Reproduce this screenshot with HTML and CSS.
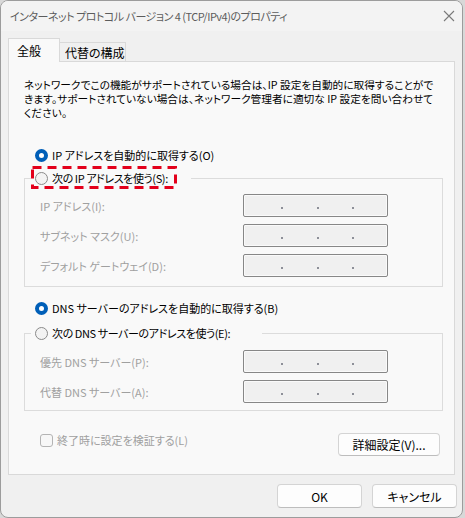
FILE: index.html
```html
<!DOCTYPE html>
<html lang="ja">
<head>
    <meta charset="UTF-8">
    <title>インターネット プロトコル バージョン 4 (TCP/IPv4)のプロパティ</title>
    <link rel="stylesheet" href="styles.css">
</head>
<body>
    <div class="window">
        <div class="titlebar">
            <span class="title">インターネット プロトコル バージョン 4 (TCP/IPv4)のプロパティ</span>
            <svg class="close" width="12" height="12" viewBox="0 0 12 12">
                <path d="M1 1L11 11M11 1L1 11" stroke="#7a7a7a" stroke-width="1.1" fill="none"/>
            </svg>
        </div>

        <div class="client">
            <div class="tabs">
                <div class="tab active">全般</div>
                <div class="tab">代替の構成</div>
            </div>

            <div class="panel">
                <p class="intro">ネットワークでこの機能がサポートされている場合は、IP 設定を自動的に取得することがで<br>きます。サポートされていない場合は、ネットワーク管理者に適切な IP 設定を問い合わせて<br>ください。</p>

                <div class="choice"><span class="radio checked"></span>IP アドレスを自動的に取得する(O)</div>

                <fieldset class="group">
                    <legend class="legend-ip"><span class="radio"></span>次の IP アドレスを使う(S):</legend>
                    <div class="fields">
                        <div class="field"><span class="field-label">IP アドレス(I):</span><span class="ipbox"><i></i><b></b><i></i><b></b><i></i><b></b><i></i></span></div>
                        <div class="field"><span class="field-label">サブネット マスク(U):</span><span class="ipbox"><i></i><b></b><i></i><b></b><i></i><b></b><i></i></span></div>
                        <div class="field"><span class="field-label">デフォルト ゲートウェイ(D):</span><span class="ipbox"><i></i><b></b><i></i><b></b><i></i><b></b><i></i></span></div>
                    </div>
                </fieldset>

                <div class="choice choice-dns"><span class="radio checked"></span>DNS サーバーのアドレスを自動的に取得する(B)</div>

                <fieldset class="group group-dns">
                    <legend class="legend-dns"><span class="radio"></span>次の DNS サーバーのアドレスを使う(E):</legend>
                    <div class="fields">
                        <div class="field"><span class="field-label">優先 DNS サーバー(P):</span><span class="ipbox"><i></i><b></b><i></i><b></b><i></i><b></b><i></i></span></div>
                        <div class="field"><span class="field-label">代替 DNS サーバー(A):</span><span class="ipbox"><i></i><b></b><i></i><b></b><i></i><b></b><i></i></span></div>
                    </div>
                </fieldset>

                <div class="panel-foot">
                    <div class="check"><span class="checkbox"></span>終了時に設定を検証する(L)</div>
                    <button class="btn btn-advanced">詳細設定(V)...</button>
                </div>

                <!-- annotation box around the manual IP option -->
                <svg class="highlight" width="146" height="23" viewBox="0 0 146 23">
                    <rect x="1.5" y="1.5" width="143" height="20" fill="none" stroke="#e3001b" stroke-width="3" stroke-dasharray="9 6"/>
                </svg>
            </div>

            <div class="actions">
                <button class="btn">OK</button>
                <button class="btn">キャンセル</button>
            </div>
        </div>
    </div>
</body>
</html>
```

FILE: styles.css
```css
* {
    box-sizing: border-box;
}

body {
    margin: 0;
    background: #d8d8d8;
    font-family: "Noto Sans CJK JP", "Noto Sans", sans-serif;
    font-size: 11px;
    font-feature-settings: "palt";
    color: #000;
}

.window {
    width: 463px;
    height: 518px;
    border: 1px solid #9c9c9c;
    border-radius: 8px;
    background: #f0f0f0;
    overflow: hidden;
}

.titlebar {
    height: 30px;
    background: #f3f3f3;
    display: flex;
    align-items: center;
    padding: 0 6px 0 9px;
}

.title {
    flex: 1;
    font-size: 11px;
    letter-spacing: -0.5px;
    color: #5c5c5c;
    white-space: nowrap;
}

.close {
    margin-right: 1px;
}

.client {
    padding: 7px 5px 0 7px;
}

.tabs {
    display: flex;
    align-items: flex-end;
    height: 24px;
    margin-bottom: -1px;
    position: relative;
    z-index: 1;
}

.tab {
    height: 19px;
    width: 67px;
    margin-left: -1px;
    padding-left: 5px;
    border: 1px solid #d9d9d9;
    border-bottom: none;
    background: #f0f0f0;
    font-size: 12px;
    display: flex;
    align-items: center;
    white-space: nowrap;
}

.tab.active {
    height: 24px;
    width: 52px;
    margin-left: 0;
    padding-left: 8px;
    background: #f9f9f9;
    position: relative;
    z-index: 2;
}

.tab + .tab {
    margin-bottom: 1px;
    height: 19px;
}

.panel {
    position: relative;
    width: 447px;
    height: 414px;
    border: 1px solid #d9d9d9;
    background: #f9f9f9;
    padding-top: 16px;
}

.intro {
    margin: 0 0 0 15px;
    font-size: 10.7px;
    line-height: 14px;
    white-space: nowrap;
}

.choice {
    display: flex;
    align-items: center;
    height: 18px;
    margin: 26px 0 0 26px;
}

.choice-dns {
    margin-top: 12px;
}

.radio {
    width: 13px;
    height: 13px;
    border-radius: 50%;
    border: 1px solid #8a8a8a;
    background: #f3f3f3;
    margin-right: 4px;
    flex: none;
}

.radio.checked {
    border: 4px solid #005fb8;
    background: #fff;
}

.group {
    margin: 5px 11px 0 15px;
    padding: 0 0 9px;
    border: 1px solid #dcdcdc;
    min-width: 0;
}

.group-dns {
    margin-top: 7px;
    padding-bottom: 7px;
}

.group legend {
    display: flex;
    align-items: center;
    height: 18px;
    margin-left: 6px;
    padding: 0 0 0 4px;
    letter-spacing: -0.4px;
    white-space: nowrap;
}

.legend-ip {
    width: 160px;
}

.legend-dns {
    width: 231px;
}

.fields {
    display: grid;
    gap: 7px;
    padding-top: 7px;
}

.group-dns .fields {
    padding-top: 8px;
}

.field {
    display: flex;
    align-items: center;
    height: 23px;
    padding-left: 15px;
}

.field-label {
    width: 203px;
    color: #a0a0a0;
    white-space: nowrap;
}

.ipbox {
    width: 145px;
    height: 23px;
    border: 1px solid #878787;
    border-radius: 2px;
    background: #f0f0f0;
    box-shadow: inset 0 0 0 1px #fafafa;
    display: flex;
    align-items: center;
    padding: 0 0 0 4px;
}

.ipbox i {
    flex: 1;
}

.ipbox b {
    width: 2px;
    height: 2px;
    margin-top: 5px;
    background: #8d8f98;
}

.panel-foot {
    display: flex;
    align-items: flex-start;
    margin: 22px 14px 0 31px;
}

.check {
    display: flex;
    align-items: center;
    height: 14px;
    color: #a0a0a0;
    white-space: nowrap;
}

.checkbox {
    width: 13px;
    height: 13px;
    border: 1px solid #b4b4b4;
    border-radius: 3px;
    background: #f7f7f7;
    margin-right: 4px;
}

.btn {
    font-family: inherit;
    font-feature-settings: "palt";
    font-size: 12px;
    color: #000;
    width: 85px;
    height: 24px;
    padding: 0;
    background: #fdfdfd;
    border: 1px solid #d4d4d4;
    border-bottom-color: #bdbdbd;
    border-radius: 4px;
}

.btn-advanced {
    margin-left: auto;
    width: 102px;
    height: 23px;
}

.actions {
    display: flex;
    justify-content: flex-end;
    gap: 10px;
    margin-top: 9px;
}

.highlight {
    position: absolute;
    left: 22px;
    top: 104px;
}
```
